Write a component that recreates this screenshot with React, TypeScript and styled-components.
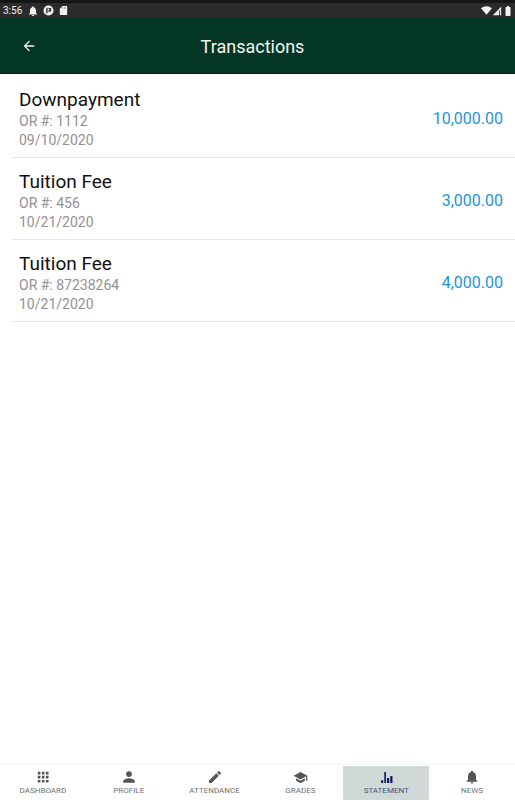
import React from "react";
import styled, { createGlobalStyle } from "styled-components";

const GlobalStyle = createGlobalStyle`
  * { box-sizing: border-box; }
  body { margin: 0; background: #fff; font-family: Roboto, "Liberation Sans", sans-serif; }
`;

const Screen = styled.div`
  min-height: 100vh;
  display: flex;
  flex-direction: column;
`;

const StatusBar = styled.div`
  height: 18px;
  flex: none;
  display: flex;
  align-items: center;
  justify-content: space-between;
  padding: 0 1px 0 3px;
  border-top: 3px solid #151515;
  background: #2b2b2b;
  color: #f2f2f2;
  font-size: 10px;
  line-height: 14px;
`;

const Notices = styled.div`
  display: flex;
  align-items: center;
  gap: 4px;
`;

const Clock = styled.span`
  margin-right: 1px;
`;

const Signals = styled.div`
  display: flex;
  align-items: center;
`;

const Glyph = styled.svg<{ $size: number }>`
  display: block;
  width: ${(p) => p.$size}px;
  height: ${(p) => p.$size}px;
  fill: currentColor;
`;

const Header = styled.header`
  height: 56px;
  flex: none;
  display: grid;
  grid-template-columns: 58px 1fr 68px;
  align-items: center;
  background: #043626;
  border-bottom: 1px solid #03190f;
  color: #f4f4f0;
`;

const BackButton = styled.button`
  justify-self: center;
  display: grid;
  place-items: center;
  width: 32px;
  height: 32px;
  padding: 0;
  border: 0;
  background: none;
  color: inherit;
`;

const Title = styled.h1`
  margin: 2px 0 0;
  text-align: center;
  font-size: 18px;
  line-height: 24px;
  font-weight: 400;
`;

const List = styled.ul`
  flex: 1;
  margin: 0;
  padding: 2px 0 0 12px;
  list-style: none;
`;

const Row = styled.li`
  display: flex;
  align-items: center;
  justify-content: space-between;
  padding: 12px 12px 8px 7px;
  border-bottom: 1px solid #e8e8e8;
`;

const Name = styled.h2`
  margin: 0;
  color: #111;
  font-size: 19px;
  line-height: 24px;
  font-weight: 400;
`;

const Details = styled.div`
  display: grid;
  gap: 1px;
`;

const Detail = styled.p`
  margin: 0;
  color: #929292;
  font-size: 14px;
  line-height: 18px;
`;

const Amount = styled.span`
  color: #2196dc;
  font-size: 16px;
  line-height: 24px;
`;

const TabBar = styled.nav`
  flex: none;
  display: grid;
  grid-template-columns: repeat(6, 1fr);
  padding: 1px 0 0;
  border-top: 1px solid #f4f4f4;
`;

const Tab = styled.button<{ $active: boolean }>`
  display: flex;
  flex-direction: column;
  align-items: center;
  min-width: 0;
  padding: 3px 0;
  border: 0;
  border-radius: 1px;
  background: ${(p) => (p.$active ? "#d0d9d6" : "transparent")};
  color: ${(p) => (p.$active ? "#0b1463" : "#555")};
`;

const TabIcon = styled.span`
  display: grid;
  place-items: center;
  height: 16px;
`;

const TabLabel = styled.span<{ $active: boolean }>`
  color: ${(p) => (p.$active ? "#41507f" : "#727272")};
  font-family: Roboto, "Liberation Sans", sans-serif;
  font-size: 8px;
  line-height: 12px;
`;

const shapes = {
  bell: "M12 22c1.1 0 2-.9 2-2h-4c0 1.1.9 2 2 2zm6-6v-5c0-3.07-1.63-5.64-4.5-6.32V4c0-.83-.67-1.5-1.5-1.5s-1.5.67-1.5 1.5v.68C7.64 5.36 6 7.92 6 11v5l-2 2v1h16v-1l-2-2z",
  app: "M12 1a11 11 0 1 0 0 22 11 11 0 0 0 0-22zM7 6h3v12H7zM12 6h2a4 4 0 0 1 0 9h-2v-3h2V9h-2z",
  card: "M18 2h-8L4 8v12c0 1.1.9 2 2 2h12c1.1 0 2-.9 2-2V4c0-1.1-.9-2-2-2zM10 5h1v3h-1zm3 0h1v3h-1zm3 0h1v3h-1z",
  wifi: "M12 21 0 7a19 19 0 0 1 24 0z",
  cell: "M2 22 22 2v20h-3V10h-2v12z",
  battery: "M15.67 4H14V2h-4v2H8.33C7.6 4 7 4.6 7 5.33v15.33C7 21.4 7.6 22 8.33 22h7.33c.74 0 1.34-.6 1.34-1.34V5.33C17 4.6 16.4 4 15.67 4z",
  back: "M20 11H7.83l5.59-5.59L12 4l-8 8 8 8 1.41-1.41L7.83 13H20v-2z",
  grid: "M3 3h4.500v4.500H3zm7 0h4.500v4.500H10zm7 0h4.500v4.500H17zM3 10h4.500v4.500H3zm7 0h4.500v4.500H10zm7 0h4.500v4.500H17zM3 17h4.500v4.500H3zm7 0h4.500v4.500H10zm7 0h4.500v4.500H17z",
  person: "M12 12a5 5 0 1 0 0-10 5 5 0 0 0 0 10zm0 2c-3.3 0-10 1.7-10 5v3h20v-3c0-3.3-6.7-5-10-5z",
  pencil: "M3 17.25V21h3.75L17.81 9.94l-3.75-3.75L3 17.25zM20.71 7.04a1 1 0 0 0 0-1.41l-2.34-2.34a1 1 0 0 0-1.41 0l-1.83 1.83 3.75 3.75 1.83-1.83z",
  school: "M5 13.18v4L12 21l7-3.82v-4L12 17l-7-3.82zM12 3 1 9l11 6 9-4.91V17h2V9L12 3z",
  chart: "M2 17h4v5H2zM8 2h3v20H8zM13 13h4v9h-4zM19 9h4v13h-4z",
};

type Shape = keyof typeof shapes;

const Icon = ({ shape, size }: { shape: Shape; size: number }) => (
  <Glyph $size={size} viewBox="0 0 24 24" aria-hidden="true">
    <path d={shapes[shape]} fillRule="evenodd" />
  </Glyph>
);

const transactions = [
  { name: "Downpayment", receipt: "1112", date: "09/10/2020", amount: "10,000.00" },
  { name: "Tuition Fee", receipt: "456", date: "10/21/2020", amount: "3,000.00" },
  { name: "Tuition Fee", receipt: "87238264", date: "10/21/2020", amount: "4,000.00" },
];

const tabs: { label: string; shape: Shape; size: number }[] = [
  { label: "DASHBOARD", shape: "grid", size: 14 },
  { label: "PROFILE", shape: "person", size: 14 },
  { label: "ATTENDANCE", shape: "pencil", size: 16 },
  { label: "GRADES", shape: "school", size: 15 },
  { label: "STATEMENT", shape: "chart", size: 13 },
  { label: "NEWS", shape: "bell", size: 16 },
];

export default function App() {
  return (
    <Screen>
      <GlobalStyle />
      <StatusBar>
        <Notices>
          <Clock>3:56</Clock>
          <Icon shape="bell" size={12} />
          <Icon shape="app" size={11} />
          <Icon shape="card" size={11} />
        </Notices>
        <Signals>
          <Icon shape="wifi" size={11} />
          <Icon shape="cell" size={10} />
          <Icon shape="battery" size={12} />
        </Signals>
      </StatusBar>
      <Header>
        <BackButton type="button" aria-label="Back">
          <Icon shape="back" size={16} />
        </BackButton>
        <Title>Transactions</Title>
      </Header>
      <List>
        {transactions.map((t) => (
          <Row key={t.receipt}>
            <div>
              <Name>{t.name}</Name>
              <Details>
                <Detail>OR #: {t.receipt}</Detail>
                <Detail>{t.date}</Detail>
              </Details>
            </div>
            <Amount>{t.amount}</Amount>
          </Row>
        ))}
      </List>
      <TabBar>
        {tabs.map(({ label, shape, size }) => {
          const active = label === "STATEMENT";
          return (
            <Tab key={label} type="button" $active={active} aria-current={active ? "page" : undefined}>
              <TabIcon>
                <Icon shape={shape} size={size} />
              </TabIcon>
              <TabLabel $active={active}>{label}</TabLabel>
            </Tab>
          );
        })}
      </TabBar>
    </Screen>
  );
}
